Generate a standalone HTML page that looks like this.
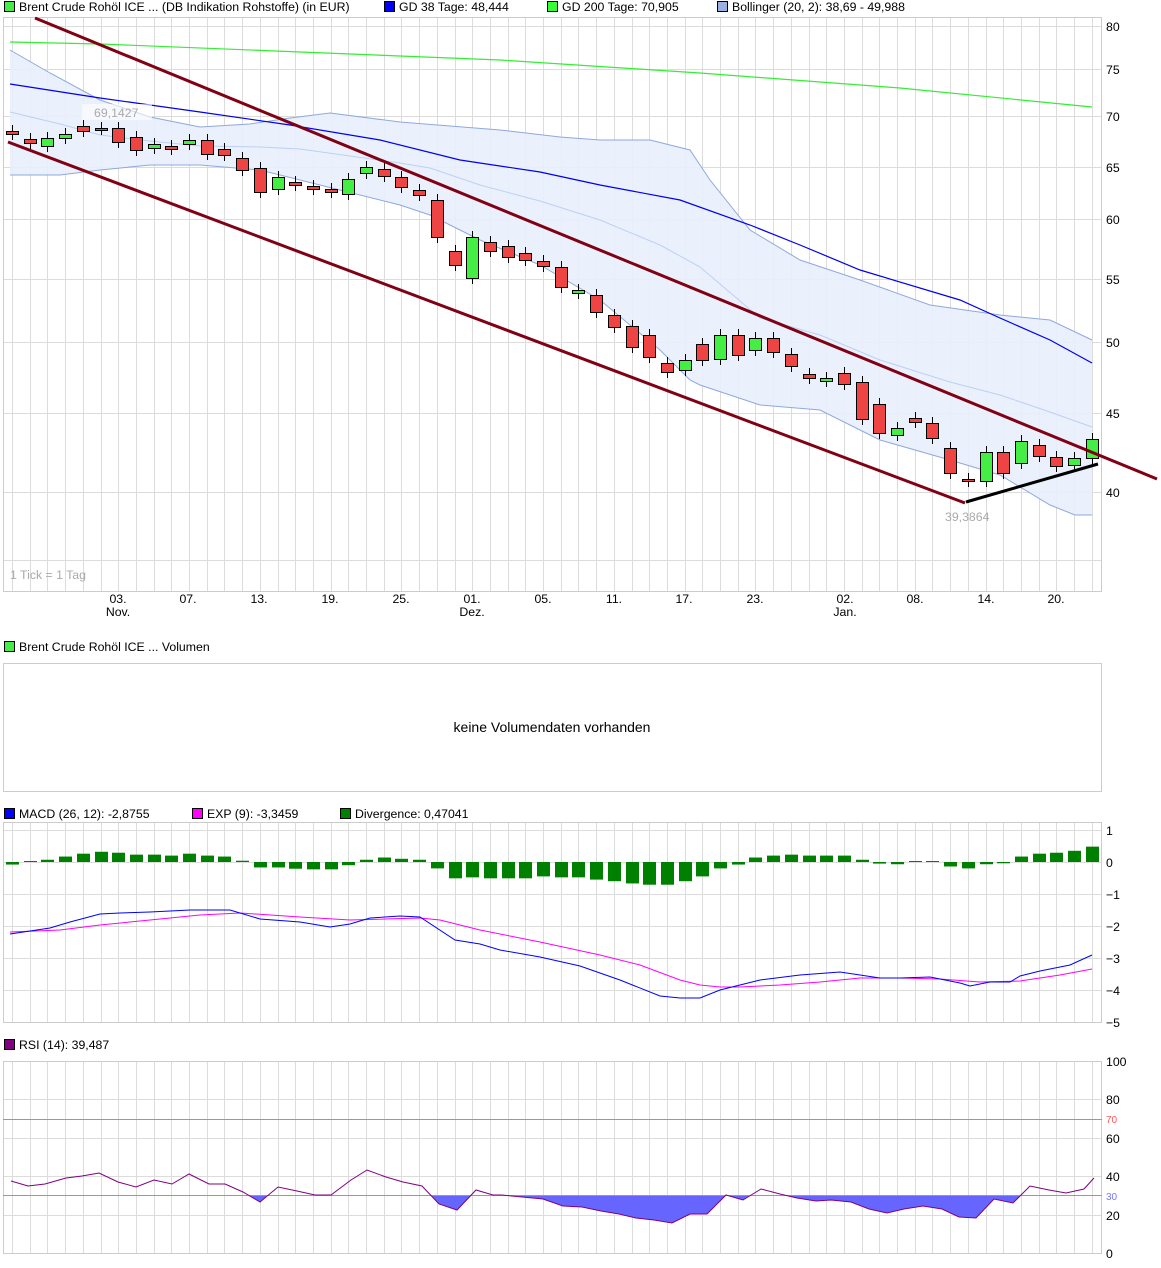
<!DOCTYPE html>
<html><head><meta charset="utf-8"><style>
html,body{margin:0;padding:0;background:#fff;}
svg{display:block;font-family:"Liberation Sans",sans-serif;font-size:12.3px;}
</style></head><body>
<svg id="s" width="1161" height="1268" viewBox="0 0 1161 1268" xmlns="http://www.w3.org/2000/svg">
<rect width="1161" height="1268" fill="#fff"/>
<g id="grid"></g>
<rect x="4.5" y="1.5" width="10" height="10" fill="#44ee44" stroke="#000"/>
<text x="19" y="11">Brent Crude Rohöl ICE ... (DB Indikation Rohstoffe) (in EUR)</text>
<rect x="384.5" y="1.5" width="10" height="10" fill="#0000ff" stroke="#000"/>
<text x="399" y="11">GD 38 Tage: 48,444</text>
<rect x="547.5" y="1.5" width="10" height="10" fill="#33ff33" stroke="#000"/>
<text x="562" y="11">GD 200 Tage: 70,905</text>
<rect x="717.5" y="1.5" width="10" height="10" fill="#99b0e0" stroke="#000"/>
<text x="732" y="11">Bollinger (20, 2): 38,69 - 49,988</text>

<polygon fill="#e8f0fc" fill-opacity="0.9" points="10,50 50,73 100,100 150,117 200,127 250,124 290,118 330,113 400,122 500,130 560,137 600,140 650,140 690,150 710,180 750,230 800,260 860,280 930,305 1000,315 1050,320 1092,340 1092,515 1075,515 1050,505 1000,475 950,460 880,440 820,410 760,405 700,385 690,380 660,350 600,300 540,265 480,240 430,215 400,205 300,180 260,170 200,165 150,165 100,170 60,175 10,175"/>
<polyline fill="none" stroke="#8fa8dc" points="10,50 50,73 100,100 150,117 200,127 250,124 290,118 330,113 400,122 500,130 560,137 600,140 650,140 690,150 710,180 750,230 800,260 860,280 930,305 1000,315 1050,320 1092,340"/>
<polyline fill="none" stroke="#8fa8dc" points="10,175 60,175 100,170 150,165 200,165 260,170 300,180 400,205 430,215 480,240 540,265 600,300 660,350 690,380 700,385 760,405 820,410 880,440 950,460 1000,475 1050,505 1075,515 1092,515"/>
<polyline fill="none" stroke="#bcd0f4" points="10,112 60,124 100,135 150,141 200,146 260,147 300,149 400,163 430,168 480,185 540,201 600,220 660,245 700,267 760,318 820,335 880,360 950,382 1000,395 1050,412 1092,427"/>
<polyline fill="none" stroke="#33ee33" stroke-width="1.2" points="10,42 100,44 300,52 500,60 700,73 900,88 1092,107"/>
<polyline fill="none" stroke="#0000ee" stroke-width="1.2" points="10,84 100,98 200,112 290,125 380,140 460,160 540,172 600,185 680,200 750,225 800,245 860,270 960,300 1000,318 1050,340 1092,363"/>

<g id="candles"></g>

<line x1="35" y1="18" x2="1157" y2="479" stroke="#800014" stroke-width="3"/>
<line x1="8" y1="142" x2="965" y2="503" stroke="#800014" stroke-width="3"/>
<line x1="966" y1="502" x2="1098" y2="464" stroke="#000" stroke-width="3"/>

<rect x="82" y="104" width="70" height="16" fill="#fff" fill-opacity="0.6"/>
<text x="94" y="117" fill="#aaa">69,1427</text>
<text x="945" y="521" fill="#aaa">39,3864</text>
<text x="10" y="579" fill="#aaa">1 Tick = 1 Tag</text>

<g fill="#000">
<text x="1106" y="31">80</text><text x="1106" y="74">75</text><text x="1106" y="121">70</text><text x="1106" y="172">65</text><text x="1106" y="224">60</text><text x="1106" y="284">55</text><text x="1106" y="347">50</text><text x="1106" y="418">45</text><text x="1106" y="497">40</text>
</g>
<g text-anchor="middle">
<text x="118" y="603">03.</text><text x="188" y="603">07.</text><text x="259" y="603">13.</text><text x="330" y="603">19.</text><text x="401" y="603">25.</text><text x="472" y="603">01.</text><text x="543" y="603">05.</text><text x="614" y="603">11.</text><text x="684" y="603">17.</text><text x="755" y="603">23.</text><text x="845" y="603">02.</text><text x="915" y="603">08.</text><text x="986" y="603">14.</text><text x="1056" y="603">20.</text>
<text x="118" y="616">Nov.</text><text x="472" y="616">Dez.</text><text x="845" y="616">Jan.</text>
</g>

<rect x="4.5" y="641.5" width="10" height="10" fill="#44ee44" stroke="#000"/>
<text x="19" y="651">Brent Crude Rohöl ICE ... Volumen</text>
<rect x="3.5" y="663.5" width="1098" height="128" fill="none" stroke="#ccc"/>
<text x="552" y="732" text-anchor="middle" font-size="14">keine Volumendaten vorhanden</text>

<rect x="4.5" y="808.5" width="10" height="10" fill="#0000ff" stroke="#000"/>
<text x="19" y="818">MACD (26, 12): -2,8755</text>
<rect x="192.5" y="808.5" width="10" height="10" fill="#ff00ff" stroke="#000"/>
<text x="207" y="818">EXP (9): -3,3459</text>
<rect x="340.5" y="808.5" width="10" height="10" fill="#008000" stroke="#000"/>
<text x="355" y="818">Divergence: 0,47041</text>
<g id="hist"></g>
<polyline fill="none" stroke="#ff00ff" points="10,932 60,930 100,925 150,920 200,915 240,913 300,917 350,920 420,918 440,920 480,930 540,942 600,955 640,965 680,980 700,985 720,987 740,987 780,985 820,982 860,978 900,978 940,979 980,982 1020,981 1060,975 1092,969"/>
<polyline fill="none" stroke="#0000ff" points="10,934 50,928 70,922 100,914 120,913 150,912 190,910 230,910 260,919 300,922 330,927 350,924 370,918 400,916 420,917 455,940 480,944 500,950 540,957 580,966 620,980 660,996 680,998 700,998 720,990 740,985 760,980 800,975 840,972 860,975 880,978 900,978 930,977 960,983 970,986 990,982 1010,982 1020,976 1040,971 1070,965 1092,955"/>
<g>
<text x="1106" y="835">1</text><text x="1106" y="867">0</text><text x="1106" y="899">−1</text><text x="1106" y="931">−2</text><text x="1106" y="963">−3</text><text x="1106" y="995">−4</text><text x="1106" y="1027">−5</text>
</g>

<rect x="4.5" y="1039.5" width="10" height="10" fill="#800080" stroke="#000"/>
<text x="19" y="1049">RSI (14): 39,487</text>
<line x1="3" y1="1119.5" x2="1102" y2="1119.5" stroke="#999"/>
<line x1="3" y1="1195.5" x2="1102" y2="1195.5" stroke="#999"/>
<clipPath id="c30"><rect x="0" y="1196" width="1161" height="60"/></clipPath>
<polygon id="rsifill" clip-path="url(#c30)" fill="#6666ff" points=""/>
<polyline id="rsiline" fill="none" stroke="#800080" points=""/>
<g>
<text x="1106" y="1066">100</text><text x="1106" y="1104">80</text><text x="1106" y="1123" fill="#ff5555" font-size="10">70</text><text x="1106" y="1143">60</text><text x="1106" y="1181">40</text><text x="1106" y="1200" fill="#7777ff" font-size="10">30</text><text x="1106" y="1220">20</text><text x="1106" y="1258">0</text>
</g>
</svg>
<script>
var NS="http://www.w3.org/2000/svg";
function el(p,t,a){var e=document.createElementNS(NS,t);for(var k in a)e.setAttribute(k,a[k]);p.appendChild(e);return e;}
function X(i){return 12+i*17.7;}
var grid=document.getElementById("grid");
var panels=[[17,591,[26,69,116,167,219,279,342,413,492,560]],[822,1022,[830,862,894,926,958,990,1022]],[1061,1253,[1061,1099,1138,1176,1215,1253]]];
panels.forEach(function(p){
 for(var i=0;i<62;i++){var x=Math.round(X(i))+0.5;el(grid,"line",{x1:x,y1:p[0],x2:x,y2:p[1],stroke:"#dcdcdc"});}
 p[2].forEach(function(y){el(grid,"line",{x1:3,y1:y+0.5,x2:1102,y2:y+0.5,stroke:"#dcdcdc"});});
 el(grid,"rect",{x:3.5,y:p[0]+0.5,width:1098,height:p[1]-p[0],fill:"none",stroke:"#ccc"});
});
var C=[[131,134,'r'],[139,143,'r'],[138,146,'g'],[134,138,'g'],[126,131,'r'],[128,129,'r'],[128,142,'r'],[137,150,'r'],[144,148,'g'],[146,149,'r'],[140,144,'g'],[140,154,'r'],[149,155,'r'],[158,170,'r'],[168,192,'r'],[177,189,'g'],[182,185,'r'],[186,189,'r'],[189,192,'r'],[179,194,'g'],[167,173,'g'],[169,176,'r'],[177,187,'r'],[190,195,'r'],[200,237,'r'],[251,265,'r'],[237,278,'g'],[242,251,'r'],[246,257,'r'],[253,260,'r'],[261,266,'r'],[267,287,'r'],[290,293,'g'],[295,312,'r'],[315,327,'r'],[326,347,'r'],[335,357,'r'],[363,372,'r'],[360,370,'g'],[344,360,'r'],[335,359,'g'],[335,355,'r'],[338,350,'g'],[338,352,'r'],[354,366,'r'],[374,378,'r'],[378,381,'g'],[373,384,'r'],[382,419,'r'],[404,433,'r'],[428,435,'g'],[418,422,'r'],[423,438,'r'],[448,473,'r'],[479,481,'r'],[452,481,'g'],[452,473,'r'],[441,463,'g'],[445,456,'r'],[457,466,'r'],[458,465,'g'],[439,458,'g']];
var cg=document.getElementById("candles");
C.forEach(function(c,i){var x=Math.round(X(i));
 el(cg,"line",{x1:x+0.5,y1:c[0]-6,x2:x+0.5,y2:c[1]+6,stroke:"#000"});
 el(cg,"rect",{x:x-5.5,y:c[0]+0.5,width:12,height:Math.max(2,c[1]-c[0]),fill:c[2]=='r'?"#ee4444":"#44ee44",stroke:"#000"});
});
var H=[-0.08,0.01,0.07,0.17,0.26,0.32,0.29,0.23,0.23,0.2,0.26,0.2,0.17,0.04,-0.17,-0.17,-0.21,-0.23,-0.23,-0.1,0.07,0.14,0.1,0.07,-0.2,-0.51,-0.48,-0.51,-0.51,-0.51,-0.45,-0.48,-0.48,-0.55,-0.6,-0.67,-0.71,-0.71,-0.6,-0.45,-0.2,-0.08,0.14,0.2,0.23,0.2,0.2,0.2,0.07,-0.05,-0.07,0.01,0.01,-0.14,-0.2,-0.07,-0.04,0.17,0.26,0.29,0.35,0.48];
var hg=document.getElementById("hist");
H.forEach(function(v,i){var x=Math.round(X(i));var h=Math.max(1,Math.abs(v)*32);
 el(hg,"rect",{x:x-6,y:v>=0?862-h:862,width:13,height:h,fill:"#008000"});});
var R=[[11,1181],[28,1186],[45,1184],[66,1178],[82,1176],[99,1173],[118,1182],[136,1187],[154,1180],[172,1184],[189,1174],[209,1184],[225,1184],[243,1192],[260,1202],[278,1187],[297,1191],[315,1195],[331,1195],[351,1180],[367,1170],[386,1177],[403,1182],[422,1186],[439,1204],[457,1210],[476,1190],[493,1195],[502,1195],[522,1197],[543,1199],[563,1206],[582,1207],[601,1211],[619,1214],[636,1218],[654,1220],[672,1223],[690,1214],[707,1214],[726,1195],[743,1200],[761,1189],[780,1194],[797,1198],[816,1201],[831,1200],[851,1202],[869,1209],[887,1213],[904,1209],[923,1206],[942,1209],[959,1217],[976,1218],[994,1199],[1013,1203],[1030,1186],[1049,1190],[1066,1193],[1084,1189],[1094,1178]];
var pts=R.map(function(p){return p[0]+","+p[1];}).join(" ");
document.getElementById("rsiline").setAttribute("points",pts);
document.getElementById("rsifill").setAttribute("points","11,1196 "+pts+" 1094,1196");
</script>
</body></html>
